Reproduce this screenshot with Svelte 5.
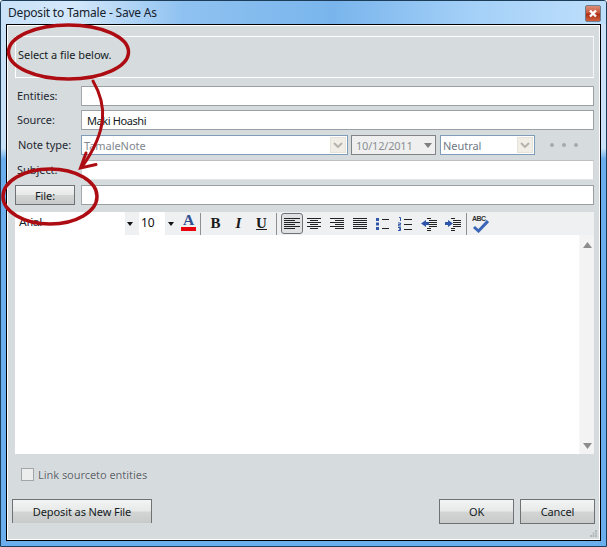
<script>
  const fields = { entities: '', source: 'Maki Hoashi' };
</script>

<div class="win">
  <div class="title">
    <span class="title-text">Deposit to Tamale - Save As</span>
    <span class="close"><svg width="10" height="9" viewBox="0 0 10 9"><path d="M2 1.500 8 7.500M8 1.500 2 7.500" stroke="#fff" stroke-width="2.400"/></svg></span>
  </div>
  <div class="inner">
    <div class="body">
      <div class="banner">Select a file below.</div>
      <div class="row r1"><label class="lab">Entities:</label><div class="input"></div></div>
      <div class="row r2"><label class="lab">Source:</label><div class="input txt">{fields.source}</div></div>
      <div class="row r3">
        <label class="lab">Note type:</label>
        <div class="combo c1"><span>TamaleNote</span><i class="dd"><svg width="10" height="6" viewBox="0 0 10 6"><path d="M1 1 5 5 9 1" fill="none" stroke="#b5b5ae" stroke-width="2"/></svg></i></div>
        <div class="combo c2"><span>10/12/2011</span><svg width="8" height="5" viewBox="0 0 8 5"><path d="M0 0H8L4 5Z" fill="#7f7f7f"/></svg></div>
        <div class="combo c3"><span>Neutral</span><i class="dd"><svg width="10" height="6" viewBox="0 0 10 6"><path d="M1 1 5 5 9 1" fill="none" stroke="#b5b5ae" stroke-width="2"/></svg></i></div>
        <div class="dots"><b></b><b></b><b></b></div>
      </div>
      <div class="row r4"><label class="lab sub">Subject:</label><div class="input soft"></div></div>
      <div class="row r5"><button class="btn file">File:</button><div class="input"></div></div>

      <div class="editor">
        <div class="toolbar">
          <span class="font">Arial</span>
          <i class="arrow a1"></i>
          <span class="size">10</span>
          <i class="arrow a2"></i>
          <span class="colorA">A</span>
          <i class="sep s1"></i>
          <span class="bi bold">B</span>
          <span class="bi ital">I</span>
          <span class="bi und">U</span>
          <i class="sep s2"></i>
          <span class="sel">
            <svg width="16" height="13" viewBox="0 0 16 13"><path d="M0 1.500H16M0 3.500H11M0 5.500H16M0 7.500H11M0 9.500H16M0 11.500H11" stroke="#222"/></svg>
          </span>
          <svg class="ic" width="14" height="14" viewBox="0 0 14 14"><path d="M0 1.500H14M3 3.500H11M0 5.500H14M3 7.500H11M0 9.500H14M3 11.500H11" stroke="#222"/></svg>
          <svg class="ic" width="14" height="14" viewBox="0 0 14 14"><path d="M0 1.500H14M5 3.500H14M0 5.500H14M5 7.500H14M0 9.500H14M5 11.500H14" stroke="#222"/></svg>
          <svg class="ic" width="14" height="14" viewBox="0 0 14 14"><path d="M0 1.500H14M0 3.500H14M0 5.500H14M0 7.500H14M0 9.500H14M0 11.500H14" stroke="#222"/></svg>
          <svg class="ic bul" width="13" height="14" viewBox="0 0 13 14"><path d="M0 1h3v3H0zM0 5.500h3v3H0zM0 10h3v3H0z" fill="#2f55a8"/><path d="M6 2.500H13M6 11.500H13" stroke="#222"/></svg>
          <svg class="ic" width="14" height="14" viewBox="0 0 14 14"><path d="M1 .5h1.500v3.500M0 6h2.500v1.500H.5V9h2.500M0 10.500h2.500V12H1h1.500v1.500H0" fill="none" stroke="#2f55a8"/><path d="M6 2.500H14M6 7.500H14M6 12.500H14" stroke="#222"/></svg>
          <svg class="ic wide" width="16" height="14" viewBox="0 0 16 14"><path d="M6 1.500H10M8 3.500H16M8 5.500H16M8 7.500H16M8 9.500H16M6 11.500H10M6 13.500H10" stroke="#222"/><path d="M0 6.500 5 3V5H8V8H5V10Z" fill="#2f55a8"/></svg>
          <svg class="ic wide last" width="16" height="14" viewBox="0 0 16 14"><path d="M6 1.500H10M8 3.500H16M8 5.500H16M8 7.500H16M8 9.500H16M6 11.500H10M6 13.500H10" stroke="#222"/><path d="M8 6.500 3 3V5H0V8H3V10Z" fill="#2f55a8"/></svg>
          <i class="sep s3"></i>
          <span class="spell"><span class="abc">ABC</span><svg width="16" height="13" viewBox="0 0 16 13"><path d="M1 7 5.500 11 15 1" fill="none" stroke="#3b66b8" stroke-width="3"/></svg></span>
        </div>
        <div class="page">
          <div class="scroll">
            <svg width="9" height="6" viewBox="0 0 9 6"><path d="M4.500 0 9 6H0Z" fill="#8d8d8d"/></svg>
            <svg width="9" height="6" viewBox="0 0 9 6"><path d="M0 0H9L4.500 6Z" fill="#8d8d8d"/></svg>
          </div>
        </div>
      </div>

      <div class="link"><span class="chk"></span><span>Link sourceto entities</span></div>

      <div class="actions">
        <button class="btn dep">Deposit as New File</button>
        <span class="grow"></span>
        <button class="btn act">OK</button>
        <button class="btn act">Cancel</button>
      </div>
    </div>
    <svg class="grip" width="7" height="7" viewBox="0 0 7 7"><path d="M5 0h2v2H5zM2.500 2.500h2v2h-2zM5 2.500h2v2H5zM0 5h2v2H0zM2.500 5h2v2h-2zM5 5h2v2H5z" fill="#b4b9bc"/></svg>
  </div>

  <svg class="marks" width="607" height="547" viewBox="0 0 607 547">
    <g fill="none" stroke="#ad0c12" stroke-width="3.500" stroke-linecap="round">
      <ellipse cx="68.500" cy="52" rx="60" ry="27"/>
      <path d="M93 81C107 105 108 130 82 167" stroke-width="3"/>
      <path d="M86 153 80.500 168 96 164.500" stroke-width="3"/>
      <ellipse cx="50" cy="196.500" rx="47" ry="27.500"/>
    </g>
  </svg>
</div>

<style>
  :global(body) { margin: 0; }
  .win {
    position: relative;
    width: 607px;
    height: 547px;
    box-sizing: border-box;
    border: 1px solid #1d3c58;
    border-radius: 3px 3px 0 0;
    background: linear-gradient(#c9e2f8 0, #c9e2f8 27%, #6aaeee 29%, #6aaeee 100%);
    padding: 0 5px 5px 5px;
    display: flex;
    flex-direction: column;
    font-family: "Liberation Sans", Arial, sans-serif;
    overflow: hidden;
  }
  .title {
    height: 23px;
    flex: none;
    margin: 0 -5px;
    padding: 0 5px;
    display: flex;
    align-items: flex-start;
    justify-content: space-between;
    color: #16222e;
    background: linear-gradient(90deg, #c9e2f8 0, #d4e8fa 12%, #8fc2f1 30%, #79b5ec 55%, #a4d0f8 78%, #bedffb 100%);
  }
  .title-text { font-family: "Noto Sans", sans-serif; font-size: 12px; letter-spacing: -0.2px; line-height: 24px; margin-left: 2px; white-space: nowrap; }
  .close {
    margin-top: 4px;
    width: 16px; height: 17px;
    box-sizing: border-box;
    border: 1px solid #6f7f8f;
    border-radius: 2px;
    background: linear-gradient(#dc8f78 0, #c9573a 45%, #ad2f14 55%, #d0603f 100%);
    display: flex; align-items: center; justify-content: center;
  }
  .inner {
    flex: 1;
    position: relative;
    box-sizing: border-box;
    border: 1px solid #000;
    box-shadow: inset 0 0 0 1px #fff;
    background: #d6dbdd;
    padding: 1px;
    min-height: 0;
  }
  .body {
    box-sizing: border-box;
    height: 100%;
    padding: 10px 5px 0 7px;
    display: flex;
    flex-direction: column;
    font-size: 11px;
    color: #1c2530;
    font-family: "Noto Sans", sans-serif;
    letter-spacing: -0.05px;
  }
  .banner {
    box-sizing: border-box;
    height: 42px;
    flex: none;
    border: 1px solid #fff;
    border-right: 1px solid #f3f5f6;
    padding-left: 2px;
    line-height: 36px;
    font-size: 11px;
    color: #141c24;
  }
  .row {
    display: flex;
    align-items: stretch;
    flex: none;
    height: 20px;
    margin-top: 5px;
  }
  .r1 { margin-top: 8px; }
  .r2 { margin-top: 4px; }
  .lab {
    width: 66px;
    flex: none;
    padding-left: 2px;
    box-sizing: border-box;
    line-height: 20px;
    font-size: 11px;
    color: #1e2832;
    white-space: nowrap;
  }
  .r3 .lab { padding-left: 3px; }
  .input {
    flex: 1;
    box-sizing: border-box;
    background: #fff;
    border: 1px solid #9a9fa3;
    border-left-color: #a5a9ad;
  }
  .input.soft { border-color: #d0d4d6; border-top-color: #bcc0c3; border-bottom-color: #e3e6e7; }
  .txt { padding-left: 5px; font-size: 11px; letter-spacing: -0.4px; line-height: 19px; color: #121a22; }
  .combo {
    box-sizing: border-box;
    border: 1px solid #7f9db9;
    background: #fff;
    height: 20px;
    display: flex;
    align-items: center;
    justify-content: space-between;
    padding: 0 1px 0 2px;
    font-size: 11px;
    color: #7f8890;
    white-space: nowrap;
  }
  .c1 { width: 267px; }
  .c2 { width: 85px; margin-left: 3px; background: #efefef; border-color: #808487; padding: 0 3px 0 4px; color: #8b8f93; letter-spacing: -0.2px; }
  .c3 { width: 95px; margin-left: 4px; }
  .c3 span { color: #6e7a85; }
  .dd {
    width: 16px; height: 16px;
    box-sizing: border-box;
    background: #f0eee6;
    border: 1px solid #e6e3d9;
    display: flex; align-items: center; justify-content: center;
  }
  .dots { display: flex; gap: 8px; align-items: center; margin-left: 15px; margin-top: -1px; }
  .dots b { width: 4px; height: 4px; border-radius: 50%; background: #a4a9ab; }
  .btn {
    box-sizing: border-box;
    font-family: "Noto Sans", sans-serif;
    font-size: 11px;
    letter-spacing: -0.1px;
    color: #141c24;
    border: 1px solid #6f7275;
    background: linear-gradient(#f3f4f4 0, #e7e8e8 48%, #d3d4d4 52%, #c9caca 100%);
    padding: 0;
    cursor: default;
  }
  .file { width: 60px; margin-right: 6px; }
  .editor { margin-top: 7px; flex: none; display: flex; flex-direction: column; }
  .toolbar {
    height: 23px;
    background: #eff0f1;
    display: flex;
    align-items: center;
    font-family: "Liberation Sans", Arial, sans-serif;
    letter-spacing: 0;
  }
  .font {
    width: 110px; height: 23px; background: #fff; flex: none;
    font-size: 11.500px; color: #16222e; padding-left: 4px; box-sizing: border-box; line-height: 20px;
  }
  .arrow { flex: none; width: 11px; height: 22px; position: relative; }
  .arrow::after {
    content: ""; position: absolute; left: 2px; top: 9px;
    border-left: 3.500px solid transparent; border-right: 3.500px solid transparent; border-top: 4px solid #111;
  }
  .size {
    flex: none; width: 26px; height: 23px; margin-left: 3px; background: #fff;
    font-size: 12px; line-height: 22px; padding-left: 2px; box-sizing: border-box; color: #111;
    font-family: "Noto Sans", sans-serif;
  }
  .a2 { width: 12px; }
  .a2::after { left: 3px; }
  .colorA {
    flex: none; width: 15px; margin-left: 4px; height: 17px; margin-bottom: 2px;
    font-family: "Liberation Serif", serif; font-weight: 700;
    color: #2f4f90; font-size: 15.500px; line-height: 12px; text-align: center;
    border-bottom: 4px solid #e8000c; box-sizing: border-box;
  }
  .sep { flex: none; width: 1px; height: 22px; background: #8d9194; }
  .s1 { margin-left: 4px; margin-right: 3px; }
  .bi { flex: none; width: 23px; font-family: "Liberation Serif", serif; font-weight: 700; font-size: 15px; color: #1a1a1a; text-align: center; }
  .ital { font-style: italic; }
  .und { text-decoration: underline; }
  .s2 { margin-right: 4px; margin-left: 3px; }
  .sel {
    flex: none; width: 22px; height: 21px; box-sizing: border-box; border: 1px solid #6e7275; border-radius: 3px;
    background: #dfe1e2; display: flex; align-items: center; justify-content: center; margin-right: 4px;
  }
  .ic { flex: none; margin-right: 9px; }
  .wide { margin-right: 8px; }
  .last { margin-right: 5px; }
  .s3 { margin-right: 5px; }
  .spell { flex: none; position: relative; width: 18px; height: 20px; display: block; }
  .spell svg { position: absolute; left: 1px; top: 6px; }
  .abc { position: absolute; left: 0; top: 0; font-size: 7px; font-weight: 700; color: #333; letter-spacing: -0.5px; line-height: 9px; }
  .page {
    height: 219px;
    background: #fff;
    display: flex;
    justify-content: flex-end;
  }
  .scroll {
    width: 15px;
    background: #f3f3f3;
    border-left: 1px solid #f7f7f7;
    box-sizing: border-box;
    display: flex;
    flex-direction: column;
    justify-content: space-between;
    align-items: center;
    padding: 7px 0 5px;
  }
  .link {
    display: flex; align-items: center; gap: 4px; margin-top: 13px; margin-left: 6px; flex: none;
    font-size: 11px; color: #5b6269; height: 14px;
    text-shadow: 0 0 1px #fff;
  }
  .chk { width: 13px; height: 13px; box-sizing: border-box; border: 1px solid #a3a6a8; background: #eceded; }
  .actions {
    display: flex;
    flex: none;
    margin-top: 18px;
    height: 25px;
    margin-left: -3px;
    margin-right: -1px;
  }
  .grow { flex: 1; }
  .dep { width: 140px; border-bottom: none; height: 24px; }
  .act { width: 75px; margin-left: 6px; height: 25px; }
  .grip { position: absolute; right: 3px; bottom: 3px; }
  .marks { position: absolute; left: -1px; top: -1px; pointer-events: none; }
</style>
